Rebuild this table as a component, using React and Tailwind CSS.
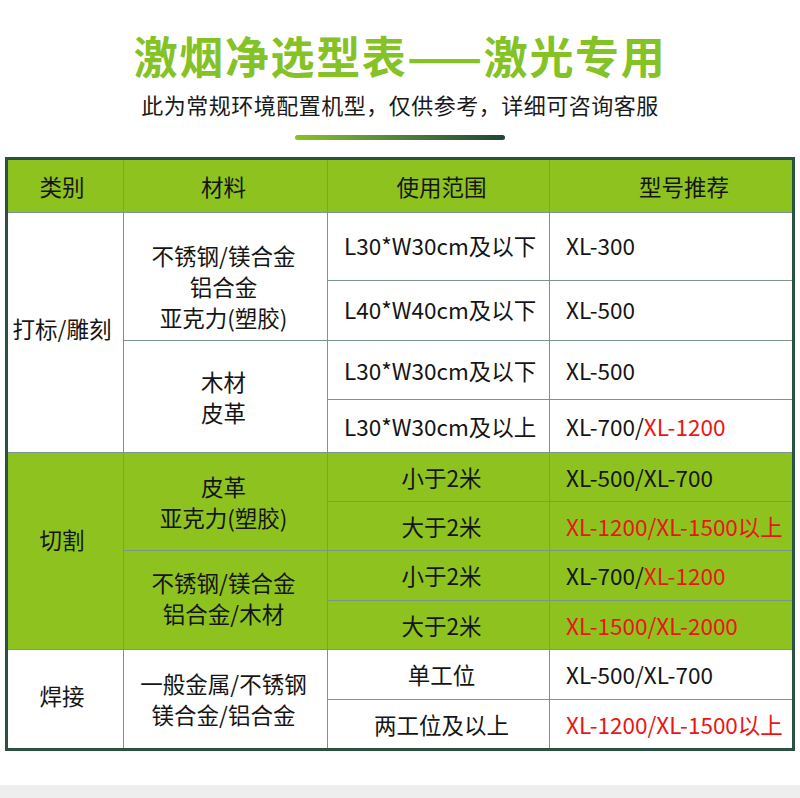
import React from "react";

const FONT = { fontFamily: '"Noto Sans CJK SC", "Noto Sans", sans-serif' };
const RED = "text-[#ec1515]";

function Cell({ className = "", children }) {
  return (
    <div className={`flex items-center text-[22.5px] leading-[31px] text-[#151515] whitespace-nowrap ${className}`}>
      {children}
    </div>
  );
}

export default function App() {
  const W = "bg-white";
  const G = "bg-[#8dc21f]";
  return (
    <div className="w-[800px] min-h-[798px] bg-white flex flex-col items-center" style={FONT}>
      <h1 className="mt-[33px] text-[44px] leading-none font-bold text-[#84c225] tracking-[1.6px]">
        激烟净选型表——激光专用
      </h1>
      <p className="mt-[16px] text-[22px] leading-none text-[#1a1a1a] tracking-[0.5px]">
        此为常规环境配置机型，仅供参考，详细可咨询客服
      </p>
      <div className="mt-[20px] h-[5px] w-[210px] rounded-full bg-gradient-to-r from-[#8dc21f] to-[#1d4636]" />

      <div className="mt-[17px] w-[790px] border-[3px] border-[#2b5141] bg-[#7a958a] grid gap-px grid-cols-[115px_203px_221px_242px] grid-rows-[52px_67px_59px_58px_52px_48px_48px_49px_48px_49px_48px]">
        {/* header */}
        <Cell className={`${G} justify-center pr-[7px]`}>类别</Cell>
        <Cell className={`${G} justify-center pr-1`}>材料</Cell>
        <Cell className={`${G} justify-center pl-[6px]`}>使用范围</Cell>
        <Cell className={`${G} justify-center pl-[26px]`}>型号推荐</Cell>

        {/* 打标/雕刻 */}
        <Cell className={`${W} row-span-4 justify-center pr-[7px] pb-[8px]`}>打标/雕刻</Cell>
        <Cell className={`${W} row-span-2 flex-col justify-center pr-1 pt-[19px]`}>
          <span>不锈钢/镁合金</span>
          <span>铝合金</span>
          <span>亚克力(塑胶)</span>
        </Cell>
        <Cell className={`${W} pl-4 pb-[3px]`}>L30*W30cm及以下</Cell>
        <Cell className={`${W} pl-4 pb-[3px]`}>XL-300</Cell>
        <Cell className={`${W} pl-4 pb-[2px]`}>L40*W40cm及以下</Cell>
        <Cell className={`${W} pl-4 pb-[2px]`}>XL-500</Cell>
        <Cell className={`${W} row-span-2 flex-col justify-center pr-1`}>
          <span>木材</span>
          <span>皮革</span>
        </Cell>
        <Cell className={`${W} pl-4`}>L30*W30cm及以下</Cell>
        <Cell className={`${W} pl-4`}>XL-500</Cell>
        <Cell className={`${W} pl-4`}>L30*W30cm及以上</Cell>
        <Cell className={`${W} pl-4`}>
          XL-700/<span className={RED}>XL-1200</span>
        </Cell>

        {/* 切割 */}
        <Cell className={`${G} row-span-4 justify-center pr-[7px] pb-[24px]`}>切割</Cell>
        <Cell className={`${G} row-span-2 flex-col justify-center pr-1`}>
          <span>皮革</span>
          <span>亚克力(塑胶)</span>
        </Cell>
        <Cell className={`${G} justify-center pl-[6px]`}>小于2米</Cell>
        <Cell className={`${G} pl-4`}>XL-500/XL-700</Cell>
        <Cell className={`${G} justify-center pl-[6px]`}>大于2米</Cell>
        <Cell className={`${G} pl-4`}>
          <span className={RED}>XL-1200/XL-1500以上</span>
        </Cell>
        <Cell className={`${G} row-span-2 flex-col justify-center pr-1 pb-[4px]`}>
          <span>不锈钢/镁合金</span>
          <span>铝合金/木材</span>
        </Cell>
        <Cell className={`${G} justify-center pl-[6px]`}>小于2米</Cell>
        <Cell className={`${G} pl-4`}>
          XL-700/<span className={RED}>XL-1200</span>
        </Cell>
        <Cell className={`${G} justify-center pl-[6px]`}>大于2米</Cell>
        <Cell className={`${G} pl-4`}>
          <span className={RED}>XL-1500/XL-2000</span>
        </Cell>

        {/* 焊接 */}
        <Cell className={`${W} row-span-2 justify-center pr-[7px] pb-2`}>焊接</Cell>
        <Cell className={`${W} row-span-2 flex-col justify-center pr-1`}>
          <span>一般金属/不锈钢</span>
          <span>镁合金/铝合金</span>
        </Cell>
        <Cell className={`${W} justify-center pl-[6px]`}>单工位</Cell>
        <Cell className={`${W} pl-4`}>XL-500/XL-700</Cell>
        <Cell className={`${W} justify-center pl-[6px]`}>两工位及以上</Cell>
        <Cell className={`${W} pl-4`}>
          <span className={RED}>XL-1200/XL-1500以上</span>
        </Cell>
      </div>

      <div className="mt-[34px] w-full h-[13px] bg-[#eeeeee]" />
    </div>
  );
}
